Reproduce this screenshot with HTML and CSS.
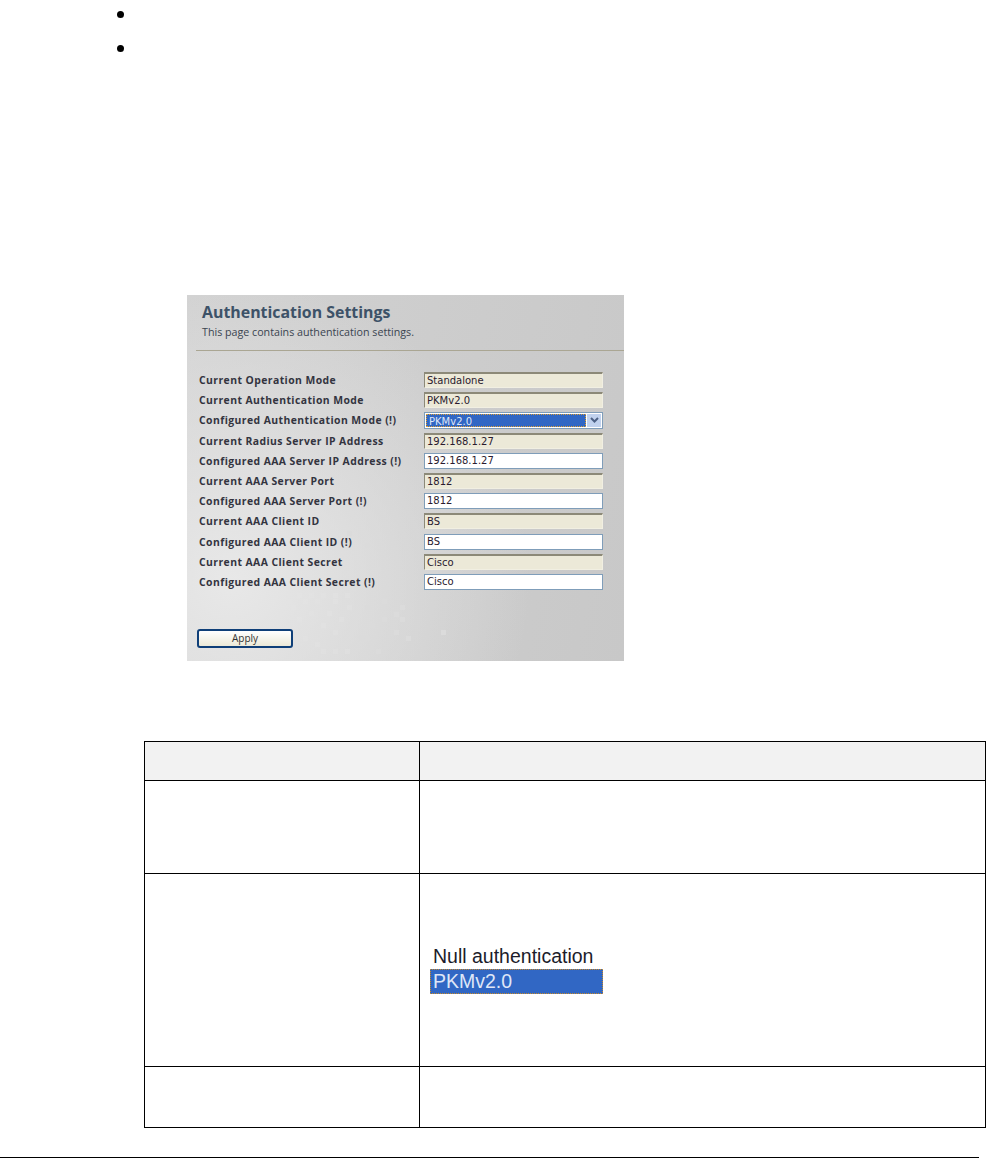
FILE: index.html
```html
<!DOCTYPE html>
<html>
<head>
<meta charset="utf-8">
<title>Authentication Settings</title>
<link rel="stylesheet" href="styles.css">
</head>
<body>
<ul class="bullets">
	<li></li>
	<li></li>
</ul>

<div class="shot">
	<svg class="dots" width="437" height="366" viewBox="0 0 437 366">
		<g fill="#dbdbdb">
			<rect x="195" y="304" width="5" height="5"/><rect x="178" y="310" width="5" height="5"/>
			<rect x="213" y="310" width="5" height="5"/><rect x="207" y="317" width="5" height="5"/>
			<rect x="195" y="322" width="5" height="5"/><rect x="213" y="322" width="5" height="5"/>
			<rect x="183" y="328" width="5" height="5"/><rect x="207" y="335" width="5" height="5"/>
			<rect x="254" y="335" width="5" height="5"/><rect x="219" y="341" width="5" height="5"/>
			<rect x="172" y="341" width="5" height="5"/><rect x="178" y="341" width="5" height="5"/>
			<rect x="189" y="354" width="5" height="5"/><rect x="160" y="236" width="5" height="5"/>
			<rect x="178" y="248" width="5" height="5"/><rect x="189" y="272" width="5" height="5"/>
		</g>
		<g fill="#e6e6e6" opacity="0.3">
			<rect x="110" y="298" width="5" height="5"/><rect x="122" y="298" width="5" height="5"/>
			<rect x="134" y="298" width="5" height="5"/><rect x="146" y="298" width="5" height="5"/>
			<rect x="158" y="298" width="5" height="5"/><rect x="100" y="304" width="5" height="5"/>
			<rect x="116" y="304" width="5" height="5"/><rect x="128" y="304" width="5" height="5"/>
			<rect x="146" y="304" width="5" height="5"/><rect x="160" y="310" width="5" height="5"/>
			<rect x="104" y="310" width="5" height="5"/><rect x="122" y="316" width="5" height="5"/>
			<rect x="140" y="316" width="5" height="5"/><rect x="152" y="322" width="5" height="5"/>
			<rect x="110" y="322" width="5" height="5"/><rect x="134" y="328" width="5" height="5"/>
			<rect x="146" y="335" width="5" height="5"/><rect x="116" y="341" width="5" height="5"/>
			<rect x="128" y="347" width="5" height="5"/><rect x="158" y="354" width="5" height="5"/>
			<rect x="146" y="354" width="5" height="5"/><rect x="134" y="354" width="5" height="5"/>
		</g>
	</svg>
	<div class="shot-head">
		<h1>Authentication Settings</h1>
		<p>This page contains authentication settings.</p>
	</div>
	<div class="rows">
		<div class="row"><span class="lbl">Current Operation Mode</span><div class="field ro">Standalone</div></div>
		<div class="row"><span class="lbl">Current Authentication Mode</span><div class="field ro">PKMv2.0</div></div>
		<div class="row"><span class="lbl">Configured Authentication Mode (!)</span>
			<div class="field sel"><span class="sel-val">PKMv2.0</span><span class="sel-btn"><svg width="9" height="6" viewBox="0 0 9 6"><path d="M1 1l3.5 3.5L8 1" fill="none" stroke="#4d6185" stroke-width="2"/></svg></span></div>
		</div>
		<div class="row"><span class="lbl">Current Radius Server IP Address</span><div class="field ro">192.168.1.27</div></div>
		<div class="row"><span class="lbl">Configured AAA Server IP Address (!)</span><div class="field">192.168.1.27</div></div>
		<div class="row"><span class="lbl">Current AAA Server Port</span><div class="field ro">1812</div></div>
		<div class="row"><span class="lbl">Configured AAA Server Port (!)</span><div class="field">1812</div></div>
		<div class="row"><span class="lbl">Current AAA Client ID</span><div class="field ro">BS</div></div>
		<div class="row"><span class="lbl">Configured AAA Client ID (!)</span><div class="field">BS</div></div>
		<div class="row"><span class="lbl">Current AAA Client Secret</span><div class="field ro">Cisco</div></div>
		<div class="row"><span class="lbl">Configured AAA Client Secret (!)</span><div class="field">Cisco</div></div>
	</div>
	<div class="apply">Apply</div>
</div>

<table class="params">
	<tr class="r-head"><th></th><th></th></tr>
	<tr class="r-one"><td></td><td></td></tr>
	<tr class="r-two">
		<td></td>
		<td>
			<div class="opt">Null authentication</div>
			<div class="opt opt-on">PKMv2.0</div>
		</td>
	</tr>
	<tr class="r-three"><td></td><td></td></tr>
</table>

<div class="foot"></div>
</body>
</html>
```

FILE: styles.css
```css
* {
	margin: 0;
	padding: 0;
	box-sizing: border-box;
}

body {
	background: #fff;
	color: #000;
	font-family: "Liberation Sans", sans-serif;
	height: 1159px;
	overflow: hidden;
}

.bullets {
	list-style: none;
	padding-left: 117px;
	margin-top: -3px;
}

.bullets li {
	height: 34px;
	display: flex;
	align-items: center;
}

.bullets li::before {
	content: "";
	width: 7px;
	height: 7px;
	border-radius: 50%;
	background: #000;
}

/* the settings page picture */
.shot {
	position: relative;
	width: 437px;
	height: 366px;
	margin: 230px 0 0 187px;
	background:
		radial-gradient(ellipse 300px 300px at 10% 78%, #e8e8e8 0%, rgba(232, 232, 232, 0) 100%),
		linear-gradient(100deg, #d2d2d2, #cbcbcb 70%, #c8c8c8);
	font-family: "Open Sans", sans-serif;
}

.dots {
	position: absolute;
	left: 0;
	top: 0;
}

.shot-head {
	position: relative;
	height: 56px;
	padding: 6px 0 0 15px;
}

.shot-head::after {
	content: "";
	position: absolute;
	left: 9px;
	right: 0;
	bottom: 0;
	height: 1px;
	background: #aaa693;
}

.shot-head h1 {
	font-size: 15.9px;
	font-weight: 700;
	line-height: 22px;
	color: #3d5268;
}

.shot-head p {
	font-size: 10.7px;
	line-height: 18px;
	color: #3a4450;
}

.rows {
	position: relative;
	padding: 19px 0 0 12px;
}

.row {
	display: flex;
	align-items: center;
	justify-content: space-between;
	width: 404px;
	height: 20.2px;
}

.lbl {
	font-size: 10.4px;
	font-weight: 700;
	letter-spacing: 0.43px;
	color: #33343f;
}

.field {
	width: 179px;
	height: 16px;
	padding-left: 2px;
	background: #fff;
	border: 1px solid #7f9db9;
	font-family: "DejaVu Sans", sans-serif;
	font-size: 10px;
	line-height: 14px;
	color: #2a1a2e;
}

.ro {
	background: #ece9d8;
	border-color: #8c8978 #f1efe2 #f1efe2 #8c8978;
	border-top-width: 2px;
	line-height: 13px;
}

.sel {
	display: flex;
	height: 17px;
	padding: 1px;
	line-height: 13px;
}

.sel-val {
	flex: 1;
	padding-left: 2px;
	background: #3167c4;
	border: 1px dotted #e0a030;
	color: #dfe6f7;
}

.sel-btn {
	width: 14px;
	margin-left: 1px;
	background: #c1d2ee;
	display: flex;
	align-items: center;
	justify-content: center;
}

.apply {
	position: relative;
	width: 96px;
	height: 19px;
	margin: 37px 0 0 10px;
	border: 2px solid #0f3f78;
	border-radius: 3px;
	background: linear-gradient(#fff, #ece9d8);
	font-size: 10px;
	line-height: 14px;
	text-align: center;
	color: #333;
}

/* parameter table */
.params {
	width: 842px;
	height: 386px;
	margin: 80px 0 0 144px;
	border-collapse: collapse;
	table-layout: fixed;
}

.params th,
.params td {
	border: 1px solid #000;
	vertical-align: top;
}

.params th:first-child,
.params td:first-child {
	width: 275px;
}

.params th {
	background: #f2f2f2;
}

.r-head { height: 39px; }
.r-one { height: 93px; }
.r-two { height: 193px; }
.r-three { height: 61px; }

.r-two td:last-child {
	padding: 70px 0 0 10px;
}

.opt {
	width: 173px;
	height: 25px;
	padding-left: 3px;
	font-size: 19.5px;
	line-height: 24px;
	color: #1c1c2a;
}

.opt-on {
	height: 25px;
	padding-left: 2px;
	background: #3167c4;
	border: 1px dotted #c98a2a;
	line-height: 23px;
	color: #dfe6f7;
}

.foot {
	width: 979px;
	margin-top: 29px;
	border-top: 1px solid #000;
}
```
